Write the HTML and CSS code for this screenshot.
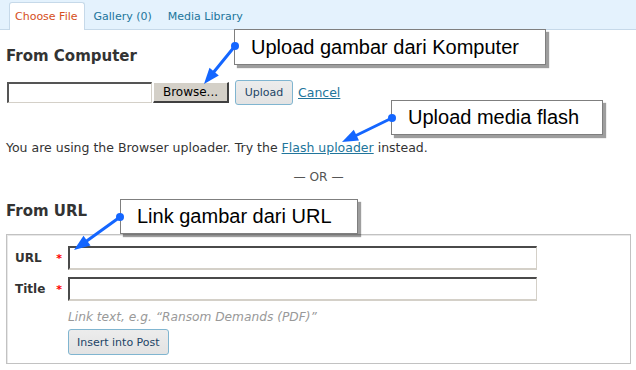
FILE: index.html
```
<!DOCTYPE html>
<html>
<head>
<meta charset="utf-8">
<link rel="stylesheet" href="styles.css">
</head>
<body>
<div class="page">
  <ul class="tabs">
    <li class="tab tab-active">Choose File</li>
    <li class="tab">Gallery (0)</li>
    <li class="tab">Media Library</li>
  </ul>
  <div class="content">
    <h3 class="heading heading-first">From Computer</h3>
    <div class="upload-row">
      <input type="text" class="file-text">
      <button class="browse">Browse...</button>
      <button class="wp-button upload">Upload</button>
      <a class="link cancel" href="#">Cancel</a>
    </div>
    <p class="note">You are using the Browser uploader. Try the <a class="link" href="#">Flash uploader</a> instead.</p>
    <p class="or">— OR —</p>
    <h3 class="heading heading-url">From URL</h3>
    <div class="url-box">
      <div class="field">
        <div class="label-cell"><span>URL</span><span class="req">*</span></div>
        <input type="text" class="text-input">
      </div>
      <div class="field">
        <div class="label-cell"><span>Title</span><span class="req">*</span></div>
        <input type="text" class="text-input">
      </div>
      <div class="after-fields">
        <p class="help">Link text, e.g. “Ransom Demands (PDF)”</p>
        <button class="wp-button insert">Insert into Post</button>
      </div>
    </div>
  </div>

  <div class="callout callout-1">Upload gambar dari Komputer</div>
  <div class="callout callout-2">Upload media flash</div>
  <div class="callout callout-3">Link gambar dari URL</div>

  <svg class="arrows" width="636" height="370" viewBox="0 0 636 370">
    <g fill="#1466ff" stroke="#1466ff" stroke-width="3" stroke-linecap="round">
      <line x1="235" y1="46" x2="213" y2="73"/>
      <line x1="392" y1="118" x2="355" y2="136"/>
      <line x1="120" y1="217" x2="86" y2="241.5"/>
    </g>
    <g fill="#1466ff">
      <circle cx="235" cy="46" r="4"/>
      <polygon points="204,84 218.8,75.4 209.5,67.8"/>
      <circle cx="392" cy="118" r="4"/>
      <polygon points="342,142 359,140.5 353.8,129.7"/>
      <circle cx="120" cy="217" r="4"/>
      <polygon points="74,250 90.5,245.6 83.5,235.8"/>
    </g>
  </svg>
</div>
</body>
</html>
```
FILE: styles.css
```
* { box-sizing: border-box; }
html, body { margin: 0; padding: 0; background: #fff; }
body {
  font-family: "DejaVu Sans", Verdana, sans-serif;
  font-size: 11px;
  color: #333;
}
.page { position: relative; width: 636px; height: 370px; overflow: hidden; }

.tabs {
  display: flex;
  align-items: flex-start;
  list-style: none;
  margin: 0;
  padding: 2px 0 0 9px;
  height: 30px;
  background: #e4f2fd;
  border-bottom: 1px solid #c6d9e9;
}
.tab {
  height: 28px;
  line-height: 27px;
  padding: 0 6px 0 5px;
  margin-right: 3px;
  border: 1px solid transparent;
  border-bottom: 0;
  color: #21759b;
}
.tab-active {
  background: #fff;
  border-color: #c6d9e9;
  border-radius: 3px 3px 0 0;
  color: #d54e21;
}

.content { padding: 0 5px 0 6px; }
.heading {
  margin: 0;
  font-size: 15px;
  line-height: 17px;
  font-weight: bold;
  color: #333;
}
.heading-first { margin-top: 18px; }
.heading-url { margin-top: 18px; }

.upload-row {
  display: flex;
  align-items: center;
  height: 25px;
  margin-top: 15px;
  padding-left: 1px;
}
.file-text {
  width: 145px;
  height: 21px;
  margin: 0;
  border-style: solid;
  border-width: 2px 1px 1px 2px;
  border-color: #555 #d4d0c8 #d4d0c8 #555;
  background: #fff;
}
.browse {
  width: 76px;
  height: 21px;
  margin: 0 0 0 1px;
  padding: 0;
  font-family: "DejaVu Sans", Verdana, sans-serif;
  font-size: 12px;
  color: #000;
  background: #d4d0c8;
  border-style: solid;
  border-width: 1px 2px 2px 1px;
  border-color: #fff #404040 #404040 #fff;
}
.wp-button {
  margin: 0;
  font-family: "DejaVu Sans", Verdana, sans-serif;
  font-size: 11px;
  color: #224466;
  background: linear-gradient(#ececec, #e3e3e3);
  border: 1px solid #80b5d0;
  border-radius: 3px;
}
.upload { width: 58px; height: 25px; margin-left: 6px; padding: 0; }
.link { color: #21759b; text-decoration: underline; }
.cancel { margin-left: 5px; font-size: 12.5px; }

.note { margin: 35px 0 0; line-height: 15px; font-size: 12.5px; }
.or { margin: 15px 0 0; line-height: 15px; font-size: 12.2px; text-align: center; color: #555; }

.url-box {
  margin-top: 14px;
  border: 1px solid #c2c2c2;
  box-shadow: inset 1px 1px 0 #e8e8e8;
  padding: 11px 0 8px;
}
.field {
  display: grid;
  grid-template-columns: 61px 469px;
  align-items: center;
}
.field + .field { margin-top: 7px; }
.label-cell {
  display: flex;
  justify-content: space-between;
  align-items: center;
  padding: 0 6px 0 8px;
  font-size: 12px;
  font-weight: bold;
  color: #333;
}
.req { color: #f00; font-size: 11px; }
.text-input {
  width: 469px;
  height: 24px;
  margin: 0;
  border-style: solid;
  border-width: 2px 1px 2px 2px;
  border-color: #4a4a4a #d4d0c8 #d4d0c8 #4a4a4a;
  background: #fff;
}
.after-fields { padding-left: 61px; }
.help {
  margin: 9px 0 0;
  line-height: 15px;
  font-size: 12.2px;
  font-style: italic;
  color: #999;
}
.insert { height: 26px; margin-top: 4px; padding: 0 8px; }

.callout {
  position: absolute;
  height: 35px;
  line-height: 33px;
  padding-left: 16px;
  font-family: "Liberation Sans", Arial, sans-serif;
  font-size: 20px;
  color: #000;
  background: #fff;
  border: 1px solid #7f7f7f;
  box-shadow: 3px 3px 1px rgba(0, 0, 0, 0.38);
  white-space: nowrap;
}
.callout-1 { left: 234px; top: 29px; width: 312px; height: 36px; line-height: 34px; }
.callout-2 { left: 391px; top: 100px; width: 212px; }
.callout-3 { left: 120px; top: 199px; width: 238px; }

.arrows { position: absolute; left: 0; top: 0; pointer-events: none; }
```
